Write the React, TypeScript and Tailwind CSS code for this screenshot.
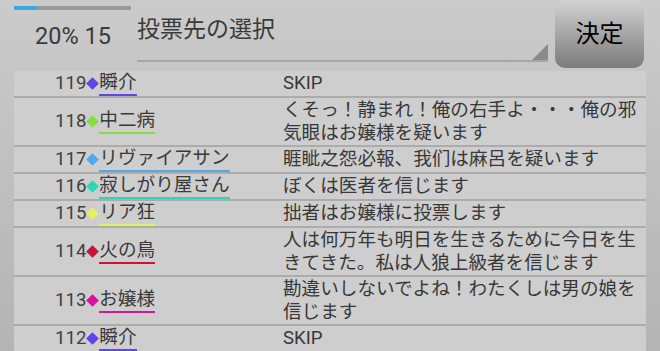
import React from "react";

interface Vote {
  no: number;
  name: string;
  color: string;
  message: string;
}

const votes: Vote[] = [
  { no: 119, name: "瞬介", color: "#5f45e4", message: "SKIP" },
  { no: 118, name: "中二病", color: "#82e03e", message: "くそっ！静まれ！俺の右手よ・・・俺の邪気眼はお嬢様を疑います" },
  { no: 117, name: "リヴァイアサン", color: "#4ea9f0", message: "睚眦之怨必報、我们は麻呂を疑います" },
  { no: 116, name: "寂しがり屋さん", color: "#2fd6b4", message: "ぼくは医者を信じます" },
  { no: 115, name: "リア狂", color: "#e2f25a", message: "拙者はお嬢様に投票します" },
  { no: 114, name: "火の鳥", color: "#cc1236", message: "人は何万年も明日を生きるために今日を生きてきた。私は人狼上級者を信じます" },
  { no: 113, name: "お嬢様", color: "#d4169a", message: "勘違いしないでよね！わたくしは男の娘を信じます" },
  { no: 112, name: "瞬介", color: "#5f45e4", message: "SKIP" },
];

const font = { fontFamily: 'Roboto, "Noto Sans CJK JP", sans-serif' };

export default function App() {
  return (
    <div
      className="w-[660px] h-[351px] overflow-hidden flex flex-col bg-gradient-to-b from-[#cbcbcb] to-[#b4b4b4] text-[#333]"
      style={font}
    >
      {/* header */}
      <div className="h-[71px] flex shrink-0">
        <div className="w-[137px] pl-[14px] flex flex-col">
          <div className="mt-[6px] w-[117px] h-[4px] bg-[#9a9a9a]">
            <div className="w-[23px] h-full bg-[#3aa9df]" />
          </div>
          <div className="mt-[13px] pl-[21px] text-[23.5px] leading-[27px] text-[#3a3a3a]">20% 15</div>
        </div>
        <div className="relative w-[411px] h-[62px] border-b-2 border-[#a6a6a6] pt-[15px] text-[23px] leading-[30px] text-[#3a3a3a]">
          投票先の選択
          <svg className="absolute right-0 bottom-0" width="16" height="16" viewBox="0 0 16 16">
            <polygon points="16,0 16,16 0,16" fill="#8a8a8a" />
          </svg>
        </div>
        <button className="ml-[7px] w-[89px] h-[68px] rounded-[10px] bg-gradient-to-b from-[#d3d3d3] to-[#7b7b7b] text-[24px] text-black flex items-center justify-center">
          決定
        </button>
      </div>

      {/* list */}
      <div className="mx-[14px] flex-1 overflow-hidden bg-[#cecece]">
        {votes.map((v, i) => (
          <div key={i} className="flex border-b-2 border-[#acacac] text-[18.6px]">
            <div className="w-[269px] pl-[41px] flex items-center">
              <span className="leading-[23px] text-[#404040]">{v.no}</span>
              <span className="ml-[2px] mr-[2px] w-[9px] h-[9px] rotate-45" style={{ backgroundColor: v.color }} />
              <span className="leading-[23px] border-b-2 text-[#3a3a3a]" style={{ borderColor: v.color }}>
                {v.name}
              </span>
            </div>
            <div className="flex-1 pt-[1px] leading-[23px] text-[#383838]">{v.message}</div>
          </div>
        ))}
      </div>
    </div>
  );
}
